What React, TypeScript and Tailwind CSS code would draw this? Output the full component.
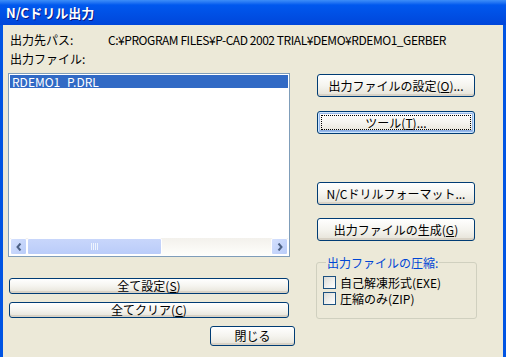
import clsx from 'clsx'
import type { ReactNode } from 'react'

function XpButton({
  children,
  focused,
  className,
}: {
  children: ReactNode
  focused?: boolean
  className?: string
}) {
  return (
    <button
      type="button"
      className={clsx(
        'flex items-center justify-center rounded-[3px] border border-[#003C74] bg-linear-to-b from-white via-[#F5F4EF] to-[#E6E3D8] text-[12px] leading-none text-black shadow-[inset_0_-2px_0_#D8D2C6]',
        focused && 'shadow-[inset_0_0_0_1px_#CEE7FF,inset_0_0_0_2px_#98B8EA,inset_0_-3px_0_#89ADE4]',
        className,
      )}
    >
      {focused ? (
        <span className="flex h-[calc(100%-6px)] w-[calc(100%-6px)] items-center justify-center border border-dotted border-black">
          {children}
        </span>
      ) : (
        children
      )}
    </button>
  )
}

function Checkbox({ label }: { label: string }) {
  return (
    <div className="flex h-[13px] items-center gap-[4px]">
      <span className="h-[13px] w-[13px] shrink-0 border border-[#1C5180] bg-linear-to-br from-[#DCDCD7] to-white" />
      <span className="text-[12px] leading-[13px]">{label}</span>
    </div>
  )
}

function ScrollArrow({ dir }: { dir: 'left' | 'right' }) {
  return (
    <div className="flex h-[17px] w-[17px] items-center justify-center rounded-[2px] border border-white bg-linear-to-br from-[#D4E0FD] to-[#B9CCF9]">
      <svg width="6" height="8" viewBox="0 0 6 8">
        <path
          d={dir === 'left' ? 'M4.5 0.5 L1.5 4 L4.5 7.5' : 'M1.5 0.5 L4.5 4 L1.5 7.5'}
          fill="none"
          stroke="#4D6185"
          strokeWidth="2"
        />
      </svg>
    </div>
  )
}

export default function App() {
  return (
    <div className="h-[357px] w-[506px] overflow-hidden bg-[#0054E3] font-['Noto_Sans_CJK_JP','Liberation_Sans',sans-serif] text-black">
      {/* title bar */}
      <div className="flex h-[25px] items-center bg-linear-to-b from-[#3D8EF8] via-[#0058EE] via-20% to-[#0046DA] pl-[6px]">
        <span className="text-[13px] font-bold leading-none text-white [text-shadow:1px_1px_0_#0A1883]">
          N/Cドリル出力
        </span>
      </div>

      <div className="mx-[3px] h-[332px] bg-[#ECE9D8] pl-[5px] text-[12px]">
        <div className="flex h-[13px] translate-y-[8px] items-center pl-[2px] leading-none">
          <span className="w-[98px]">出力先パス:</span>
          <span className="tracking-[-0.45px]">C:¥PROGRAM FILES¥P-CAD 2002 TRIAL¥DEMO¥RDEMO1_GERBER</span>
        </div>

        <div className="mt-[15px] flex">
          {/* left column */}
          <div className="flex w-[287px] flex-col">
            <span className="h-[13px] pl-[2px] leading-none">出力ファイル:</span>
            <div className="mt-[7px] flex h-[184px] w-[282px] flex-col border border-[#7F9DB9] bg-white p-px">
              <div className="h-[13px] bg-[#316AC5] pl-[2px] text-[12px] leading-[13px] text-white">
                RDEMO1_P.DRL
              </div>
              <div className="flex-1" />
              <div className="flex h-[17px] bg-linear-to-b from-[#F3F1EC] to-[#FEFEFB]">
                <ScrollArrow dir="left" />
                <div className="flex h-[17px] w-[135px] items-center justify-center rounded-[2px] border border-white bg-linear-to-b from-[#C8D6FB] to-[#BACCF9]">
                  <div className="flex gap-px">
                    <span className="h-[7px] w-px bg-[#EEF4FE]" />
                    <span className="h-[7px] w-px bg-[#EEF4FE]" />
                    <span className="h-[7px] w-px bg-[#EEF4FE]" />
                    <span className="h-[7px] w-px bg-[#EEF4FE]" />
                  </div>
                </div>
                <div className="flex-1" />
                <ScrollArrow dir="right" />
              </div>
            </div>
            <XpButton className="ml-px mt-[21px] h-[16px] w-[280px]">
              全て設定(<span className="underline">S</span>)
            </XpButton>
            <XpButton className="ml-px mt-[8px] h-[16px] w-[280px]">
              全てクリア(<span className="underline">C</span>)
            </XpButton>
            <XpButton className="ml-[202px] mt-[8px] h-[20px] w-[85px]">閉じる</XpButton>
          </div>

          {/* right column */}
          <div className="ml-[22px] flex flex-col">
            <XpButton className="mt-[21px] h-[23px] w-[158px]">
              出力ファイルの設定(<span className="underline">O</span>)...
            </XpButton>
            <XpButton focused className="mt-[14px] h-[23px] w-[158px]">
              ツール(<span className="underline">T</span>)...
            </XpButton>
            <XpButton className="mt-[48px] h-[23px] w-[158px]">N/Cドリルフォーマット...</XpButton>
            <XpButton className="mt-[13px] h-[23px] w-[158px]">
              出力ファイルの生成(<span className="underline">G</span>)
            </XpButton>
            <fieldset className="-ml-px mt-[15px] flex h-[63px] w-[161px] flex-col gap-[3px] rounded-[3px] border border-[#D0D0BF] pl-[6px]">
              <legend className="ml-[3px] px-px text-[12px] leading-[13px] text-[#0046D5]">
                出力ファイルの圧縮:
              </legend>
              <div className="mt-[4px]" />
              <Checkbox label="自己解凍形式(EXE)" />
              <Checkbox label="圧縮のみ(ZIP)" />
            </fieldset>
          </div>
        </div>
      </div>
    </div>
  )
}
